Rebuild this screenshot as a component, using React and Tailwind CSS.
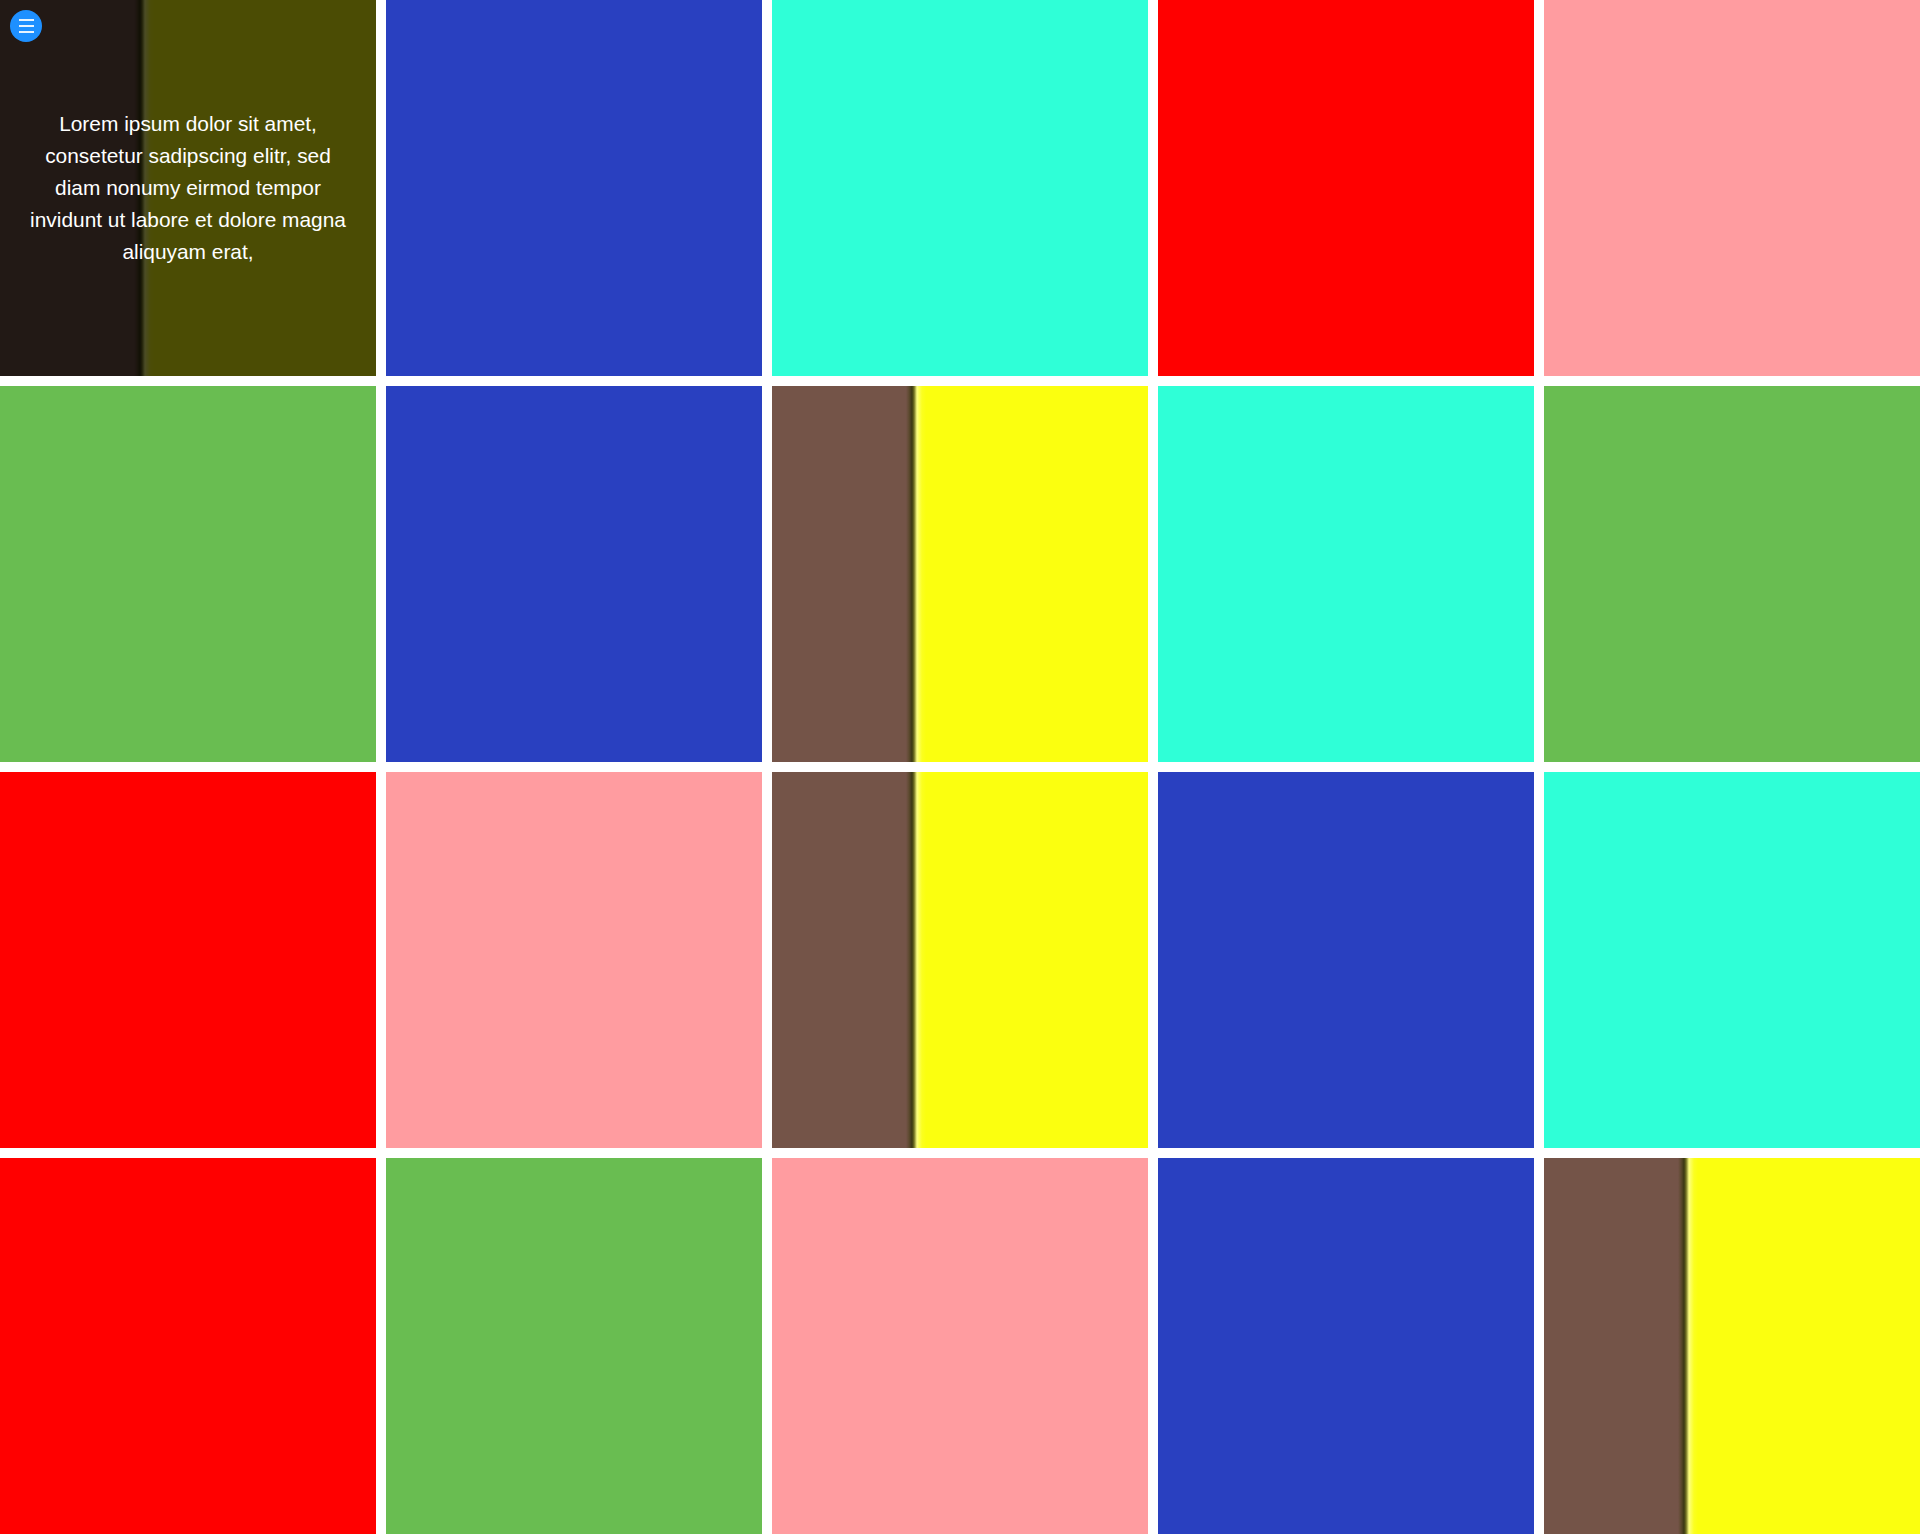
const tiles = [
  "image", "blue", "cyan", "red", "pink",
  "green", "blue", "image", "cyan", "green",
  "red", "pink", "image", "blue", "cyan",
  "red", "green", "pink", "blue", "image",
];

const colorClass = {
  blue: "bg-[#2940c0]",
  cyan: "bg-[#2fffd7]",
  red: "bg-[#ff0000]",
  pink: "bg-[#ff9ca0]",
  green: "bg-[#69bd51]",
};

const ImageTile = ({ children }) => (
  <div className="relative h-[376px] bg-[linear-gradient(to_right,#745448_0px,#745448_134px,#5e4a30_137px,#3a3812_140px,#6e6e20_142px,#fdff80_145px,#fbff20_150px,#fbff0f_154px,#fbff0f_100%)]">
    {children}
  </div>
);

const App = () => {
  return (
    <div className="relative w-[1920px] bg-white font-['Liberation_Sans',Arial,sans-serif]">
      <div className="grid grid-cols-5 gap-[10px]">
        {tiles.map((t, i) => {
          if (t === "image" && i === 0) {
            return (
              <ImageTile key={i}>
                <div className="absolute inset-0 bg-black/70 flex items-center justify-center px-[24px]">
                  <p className="text-white text-[20.9px] leading-[32px] text-center">
                    Lorem ipsum dolor sit amet, consetetur sadipscing elitr, sed diam nonumy eirmod tempor invidunt ut labore et dolore magna aliquyam erat,
                  </p>
                </div>
              </ImageTile>
            );
          }
          if (t === "image") return <ImageTile key={i} />;
          return <div key={i} className={`h-[376px] ${colorClass[t]}`} />;
        })}
      </div>

      <button className="absolute left-[10px] top-[10px] w-[32px] h-[32px] rounded-full bg-[#1e90ff] flex flex-col items-center justify-center gap-[4px]">
        <span className="block w-[15px] h-[2px] bg-white/90" />
        <span className="block w-[15px] h-[2px] bg-white/90" />
        <span className="block w-[15px] h-[2px] bg-white/90" />
      </button>
    </div>
  );
};

export default App;
